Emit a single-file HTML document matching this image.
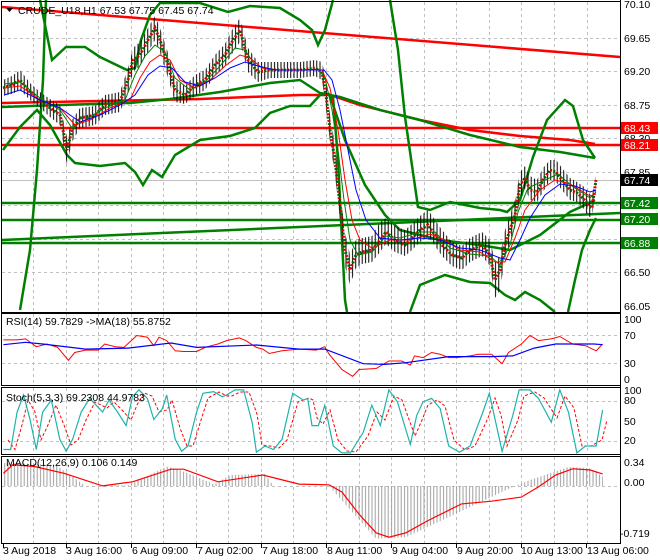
<!DOCTYPE html>
<html><head><meta charset="utf-8"><style>
html,body{margin:0;padding:0;background:#fff;}
svg{display:block;font-family:"Liberation Sans",sans-serif;font-size:10.5px;}
</style></head><body>
<svg width="660" height="560" xmlns="http://www.w3.org/2000/svg">
<defs>
<pattern id="wk" width="3.25" height="10" patternUnits="userSpaceOnUse"><rect x="1" y="0" width="1" height="10" fill="#000"/></pattern>
<pattern id="hs" width="3.25" height="10" patternUnits="userSpaceOnUse"><rect x="1" y="0" width="1" height="10" fill="#a0a0a0"/></pattern>
</defs>
<rect width="660" height="560" fill="#fff"/>
<g stroke="#c0c0c0" stroke-dasharray="3,3" stroke-width="1">
<path d="M33.5 2V312M66.5 2V312M98.5 2V312M131.5 2V312M163.5 2V312M196.5 2V312M228.5 2V312M261.5 2V312M293.5 2V312M326.5 2V312M359.5 2V312M391.5 2V312M424.5 2V312M456.5 2V312M489.5 2V312M521.5 2V312M554.5 2V312M587.5 2V312"/>
<path d="M33.5 314V385M66.5 314V385M98.5 314V385M131.5 314V385M163.5 314V385M196.5 314V385M228.5 314V385M261.5 314V385M293.5 314V385M326.5 314V385M359.5 314V385M391.5 314V385M424.5 314V385M456.5 314V385M489.5 314V385M521.5 314V385M554.5 314V385M587.5 314V385"/>
<path d="M33.5 388V454M66.5 388V454M98.5 388V454M131.5 388V454M163.5 388V454M196.5 388V454M228.5 388V454M261.5 388V454M293.5 388V454M326.5 388V454M359.5 388V454M391.5 388V454M424.5 388V454M456.5 388V454M489.5 388V454M521.5 388V454M554.5 388V454M587.5 388V454"/>
<path d="M33.5 457V543M66.5 457V543M98.5 457V543M131.5 457V543M163.5 457V543M196.5 457V543M228.5 457V543M261.5 457V543M293.5 457V543M326.5 457V543M359.5 457V543M391.5 457V543M424.5 457V543M456.5 457V543M489.5 457V543M521.5 457V543M554.5 457V543M587.5 457V543"/>
<path d="M2 38.5H620M2 71.5H620M2 105.5H620M2 138.5H620M2 172.5H620M2 205.5H620M2 239.5H620M2 272.5H620M2 335.5H620M2 363.5H620M2 401.5H620M2 441.5H620M2 486.5H620"/>
</g>
<line x1="2" y1="180.5" x2="620" y2="180.5" stroke="#c0c0c0"/>
<g fill="none" stroke-width="2.5">
<polyline points="2,7 620,57" stroke="#f00"/>
<polyline points="2,103 100,101 200,99 300,95 330,95 360,105 420,120 470,130 520,136 570,140 595,144" stroke="#f00"/>
<polyline points="2,128 620,128" stroke="#f00"/>
<polyline points="2,145 620,145" stroke="#f00"/>
<polyline points="2,203 620,203" stroke="#008000"/>
<polyline points="2,220 620,220" stroke="#008000"/>
<polyline points="2,243 620,243" stroke="#008000"/>
<polyline points="2,240 620,213" stroke="#008000"/>
<polyline points="2,107 60,105 130,103 170,99 220,92 270,83 300,80 320,93 340,97 380,110 420,120 470,135 520,147 560,152 595,158" stroke="#008000"/>
<polyline points="40,0 45,25 52,60 66,47 85,47 100,57 127,70 135,68 141,40 150,15 160,3 200,3 228,12 250,6 280,8 300,20 312,30 318,45 325,30 333,0" stroke="#008000"/>
<polyline points="20,310 30,250 37,170 43,80 45,20 46,0" stroke="#008000"/>
<polyline points="3,150 20,127 37,110 50,125 67,155 75,163 100,166 125,163 135,172 143,185 152,170 162,177 175,155 200,140 230,136 255,128 270,113 290,106 310,106 320,95 330,94" stroke="#008000"/>
<polyline points="390,0 398,50 405,117 418,207 430,210 450,202 480,208 500,210 507,212 520,200 533,157 547,120 565,100 573,106 583,140 595,158" stroke="#008000"/>
<polyline points="330,96 345,140 365,185 385,215 400,230 440,240 480,245 510,250 540,235 570,212 585,205 595,200" stroke="#008000"/>
<polyline points="333,97 338,160 342,240 345,300 347,312" stroke="#008000"/>
<polyline points="410,312 420,285 445,275 470,282 490,283 505,295 515,300 525,292 540,300 555,312" stroke="#008000"/>
<polyline points="568,312 575,280 582,250 590,230 596,218" stroke="#008000"/>
</g>
<!-- candles: wick envelope -->
<polygon fill="url(#wk)" points="3,80 12,76 20,70 30,83 40,92 50,99 60,105 67,138 72,120 80,108 95,106 105,95 120,92 128,68 133,48 140,42 148,28 155,16 160,28 168,53 175,80 185,86 195,75 205,70 215,55 225,44 232,30 240,18 248,48 258,62 270,62 285,62 300,62 315,60 322,62 326,80 330,115 335,145 340,190 345,232 350,255 356,240 362,238 372,236 380,222 386,218 395,226 405,230 412,224 420,216 428,210 435,220 442,230 452,242 462,246 470,238 482,232 490,240 495,262 500,256 505,230 510,215 515,200 520,172 525,166 530,176 537,180 543,168 550,160 556,160 562,168 570,178 577,182 583,186 588,192 592,196 596,176 596,186 592,218 588,216 583,208 577,202 570,200 562,190 556,182 550,180 543,192 537,202 530,200 525,188 520,198 515,228 510,242 505,258 500,290 495,298 490,266 482,256 470,262 462,270 452,266 442,256 435,246 428,236 420,242 412,250 405,256 395,252 386,244 380,252 372,262 362,264 356,268 350,285 345,266 340,220 335,175 330,142 326,108 322,80 315,76 300,78 285,78 270,78 258,82 248,72 240,42 232,54 225,66 215,76 205,90 195,96 185,104 175,102 168,78 160,52 155,40 148,52 140,66 133,72 128,92 120,112 105,115 95,125 80,128 72,142 67,165 60,125 50,117 40,108 30,100 20,90 12,94 3,96"/>
<!-- candle bodies -->
<polyline fill="none" stroke="#006400" stroke-width="3" stroke-dasharray="2,4.5" points="3,88 12,85 20,80 30,92 40,100 50,108 60,115 67,150 72,130 80,118 95,115 105,105 120,102 128,80 133,60 140,55 148,40 155,28 160,40 168,65 175,90 185,95 195,85 205,80 215,65 225,55 232,42 240,30 248,60 258,72 270,70 285,70 300,70 315,68 322,72 326,95 330,130 335,160 340,205 345,250 350,270 356,255 362,252 372,250 380,240 386,232 395,240 405,245 412,238 420,230 428,225 435,235 442,245 452,255 462,258 470,250 482,245 490,255 495,280 500,270 505,245 510,230 515,215 520,185 525,178 530,190 537,192 543,180 550,170 556,172 562,180 570,190 577,193 583,198 588,205 592,208 596,180"/>
<polyline fill="none" stroke="#e00000" stroke-width="3" stroke-dasharray="2,4.5" stroke-dashoffset="3.25" points="3,88 12,85 20,80 30,92 40,100 50,108 60,115 67,150 72,130 80,118 95,115 105,105 120,102 128,80 133,60 140,55 148,40 155,28 160,40 168,65 175,90 185,95 195,85 205,80 215,65 225,55 232,42 240,30 248,60 258,72 270,70 285,70 300,70 315,68 322,72 326,95 330,130 335,160 340,205 345,250 350,270 356,255 362,252 372,250 380,240 386,232 395,240 405,245 412,238 420,230 428,225 435,235 442,245 452,255 462,258 470,250 482,245 490,255 495,280 500,270 505,245 510,230 515,215 520,185 525,178 530,190 537,192 543,180 550,170 556,172 562,180 570,190 577,193 583,198 588,205 592,208 596,180"/>
<!-- MAs -->
<polyline fill="none" stroke="#008000" stroke-width="1" points="4,84 20,82 40,98 60,110 72,128 85,120 105,108 125,100 135,75 145,56 155,45 165,52 175,78 190,90 205,82 220,66 235,48 245,50 255,65 270,70 300,70 318,69 325,78 332,110 338,150 344,200 350,240 358,255 372,252 386,236 400,238 420,232 435,232 450,248 470,254 490,256 500,265 510,245 518,212 528,188 545,180 558,174 572,186 590,198 596,192"/>
<polyline fill="none" stroke="#f00" stroke-width="1" points="4,88 20,86 40,100 60,108 75,125 90,120 110,108 130,100 140,78 150,62 160,55 170,60 180,80 195,88 210,80 225,66 240,55 250,58 262,68 280,70 310,70 322,70 330,88 338,130 345,180 352,220 360,240 372,248 390,240 410,240 430,234 445,240 460,250 480,252 495,262 505,262 515,238 525,210 540,190 555,180 570,184 590,196 596,194"/>
<polyline fill="none" stroke="#00f" stroke-width="1" points="4,95 20,90 40,100 60,108 80,122 100,115 120,105 135,95 148,75 160,66 172,68 185,82 200,86 215,78 230,68 245,62 258,66 275,70 310,70 324,70 332,80 340,110 348,150 356,190 366,220 380,238 400,240 420,238 440,240 460,248 480,250 500,258 510,260 520,240 530,218 545,195 560,184 575,186 590,192 596,190"/>
<!-- frames -->
<g stroke="#000" fill="none" stroke-width="1">
<rect x="1.5" y="1.5" width="619" height="311"/>
<rect x="1.5" y="313.5" width="619" height="72"/>
<rect x="1.5" y="387.5" width="619" height="67"/>
<rect x="1.5" y="456.5" width="619" height="87"/>
<line x1="620.5" y1="0" x2="620.5" y2="544"/>
</g>
<!-- header -->
<polygon points="6,8 13,8 9.5,12" fill="#000"/>
<text x="18" y="14" fill="#000">CRUDE_U18,H1  67.53 67.75 67.45 67.74</text>
<g fill="#000">
<text x="624" y="8">70.10</text><text x="624" y="42">69.65</text><text x="624" y="75">69.20</text><text x="624" y="109">68.75</text><text x="624" y="142">68.30</text><text x="624" y="176">67.85</text><text x="624" y="276">66.50</text><text x="624" y="310">66.05</text>
</g>
<rect x="621" y="122" width="37" height="12" fill="#f00"/><text x="624" y="132" fill="#fff">68.43</text>
<rect x="621" y="139" width="37" height="12" fill="#f00"/><text x="624" y="149" fill="#fff">68.21</text>
<rect x="621" y="174" width="37" height="12" fill="#000"/><text x="624" y="184" fill="#fff">67.74</text>
<rect x="621" y="197" width="37" height="12" fill="#008000"/><text x="624" y="207" fill="#fff">67.42</text>
<rect x="621" y="213" width="37" height="12" fill="#008000"/><text x="624" y="223" fill="#fff">67.20</text>
<rect x="621" y="237" width="37" height="12" fill="#008000"/><text x="624" y="247" fill="#fff">66.88</text>
<!-- RSI -->
<polyline fill="none" stroke="#f00" stroke-width="1" points="3.4,339.9 17.1,339.9 25.6,338.9 36.3,346.7 47,344 57.7,347.4 68.4,360.3 74.8,352.5 85.5,350.1 98.3,350.1 104.7,344 115.4,346.7 123.9,347.4 136.8,335.5 147.4,337.2 153.8,345.7 159,337.2 166.7,340.6 175.2,350.8 183.8,351.5 196.6,351.5 205.1,347.4 217.9,344 226.5,340.6 239.3,337.9 245.7,340.6 256.4,347.4 262.8,349.1 269.2,353.5 282.1,350.8 299.1,349.1 316.2,350.1 324.8,346.7 329.1,354.2 341.9,369.5 352.6,376.3 359,369.5 376.1,368.5 388.9,361 401.7,361 410.3,365.1 414.5,355.9 423.1,357.6 431.6,352.5 440.2,354.2 448.7,357.6 457.3,357.6 470.1,355.9 478.6,354.2 491.5,354.2 502.1,363.7 508.5,352.5 521.4,344 529.9,335.5 538.5,340.6 551.3,338.9 559.8,336.5 572.6,344 585.5,345.7 596.2,350.8 602.6,344"/>
<polyline fill="none" stroke="#00f" stroke-width="1.2" points="3.4,344.7 25.6,342.3 42.7,344 85.5,349.1 128.2,348.1 170.9,343 196.6,347.4 256.4,345 299.1,349.1 324.8,349.1 363.2,363.7 384.6,364.4 406,362.7 448.7,356.6 491.5,356.6 512.8,355.9 534.2,348.1 555.6,344 594,344 602.6,344.7"/>
<text x="6" y="325">RSI(14) 59.7829  -&gt;MA(18) 55.8752</text>
<text x="624" y="323">100</text><text x="624" y="339">70</text><text x="624" y="367">30</text><text x="624" y="383">0</text>
<!-- Stoch -->
<polyline fill="none" stroke="#f00" stroke-width="1" stroke-dasharray="3,2" points="8,440 15,449.5 22,425 28,400 35,412 41,440 48,425 56,405 64,425 71,445 78,440 86,420 95,402 107,408 114,402 122,410 131,420 137,405 144,393 152,396 159,412 167,410 172,400 180,428 187,446 193,446 201,420 208,398 219,392 227,396 232,396 240,392 249,392 257,414 262,445 270,446 279,448 287,440 298,402 309,398 313,400 317,418 323,424 330,410 338,440 347,451 356,452 368,436 377,412 385,420 394,396 402,400 415,436 422,420 428,405 437,400 445,406 454,440 465,450 475,446 488,418 495,398 501,415 507,446 518,420 524,396 535,392 544,398 557,418 565,396 574,408 582,446 591,446 602,440 607,420"/>
<polyline fill="none" stroke="#20b2aa" stroke-width="1.2" points="3.4,449.5 10.7,449.5 17.1,412 23.5,395 29.9,418.8 36.3,449.5 42.7,412 51.3,400.1 59.8,439.3 66.2,451.2 72.6,439.3 81.2,412 89.7,398.4 102.6,412 109,400.1 117.5,412 126.1,425.6 132.5,396.7 138.9,389.9 147.4,398.4 153.8,419.5 162.4,408.6 166.7,395 175.2,439.3 181.6,451.2 188,446 196.6,412 203,393.3 213.7,391.6 222.2,396.7 226.5,395 235,389.9 243.6,389.9 252.1,422.2 256.4,452.2 265,446 273.5,449.5 282.1,439.3 292.7,393.3 303.4,400.1 307.7,398.4 312,425.6 318.4,425.6 324.8,405.2 333.3,446 341.9,452.9 350.4,452.9 363.2,432.4 371.8,405.2 380.3,425.6 388.9,389.9 397.4,401.8 410.3,444.4 416.7,415.4 423.1,401.8 431.6,398.4 440.2,408.6 448.7,446 459.4,452.2 470.1,446 482.9,412 489.3,393.3 495.7,422.2 502.1,451.2 512.8,415.4 519.2,389.9 529.9,389.9 538.5,398.4 551.3,422.2 559.8,389.9 568.4,412 576.9,452.9 585.5,446 596.2,446 602.6,410"/>
<text x="6" y="401">Stoch(5,3,3) 69.2308 44.9783</text>
<text x="624" y="394">100</text><text x="624" y="404">80</text><text x="624" y="425">50</text><text x="624" y="444">20</text>
<!-- MACD -->
<polygon fill="url(#hs)" points="3,486 3,463 55.6,464.8 85.5,485.9 128.2,485.2 166.7,466.5 179.5,469.9 213.7,484.1 230.8,475 265,474 273.5,486 329,486 341.9,500.5 376,538.6 406,537.2 512.8,486.9 530,480 568.4,467 589.7,468.2 603,476.7 603,486"/>
<polyline fill="none" stroke="#f00" stroke-width="1.2" points="3.4,473.3 12.8,464.8 34.2,466.5 64.1,473.3 102.6,485.9 132.5,481.8 170.9,469.2 183.8,469.2 217.9,481.8 262.8,475 299.1,484.1 329.1,484.8 341.9,492 359,514.1 376.1,532.8 388.9,537.2 406,532.8 427.4,520.9 461.5,503.9 491.5,501.2 521.4,497.1 538.5,486.9 555.6,475 572.6,468.8 589.7,469.9 602.6,473.9"/>
<text x="6" y="466">MACD(12,26,9) 0.106 0.149</text>
<text x="624" y="466">0.34</text><text x="624" y="486">0.00</text><text x="620" y="537">-0.719</text>
<!-- time axis -->
<g fill="#000">
<text x="3" y="554">3 Aug 2018</text><text x="66" y="554">3 Aug 16:00</text><text x="132" y="554">6 Aug 09:00</text><text x="197" y="554">7 Aug 02:00</text><text x="262" y="554">7 Aug 18:00</text><text x="327" y="554">8 Aug 11:00</text><text x="392" y="554">9 Aug 04:00</text><text x="457" y="554">9 Aug 20:00</text><text x="521" y="554">10 Aug 13:00</text><text x="587" y="554">13 Aug 06:00</text>
</g>
<path stroke="#000" d="M3.5 544V548M66.5 544V548M131.5 544V548M196.5 544V548M261.5 544V548M326.5 544V548M391.5 544V548M456.5 544V548M521.5 544V548M586.5 544V548"/>
</svg>
</body></html>
